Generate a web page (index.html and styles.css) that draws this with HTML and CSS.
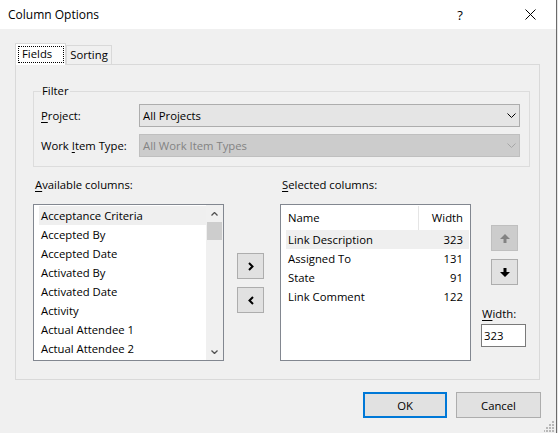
FILE: index.html
```html
<!DOCTYPE html>
<html>
<head>
<meta charset="utf-8">
<title>Column Options</title>
<link rel="stylesheet" href="styles.css">
</head>
<body>
<div class="window">
  <div class="titlebar">
    <span class="title">Column Options</span>
    <span class="help">?</span>
    <span class="close"><svg width="11" height="11" viewBox="0 0 11 11"><path d="M0.5 0.5L10.5 10.5M10.5 0.5L0.5 10.5" stroke="#000" stroke-width="1" fill="none"/></svg></span>
  </div>
  <div class="content">
    <div class="tabs">
      <div class="tab active"><span class="focus">Fields</span></div>
      <div class="tab">Sorting</div>
    </div>
    <div class="panel">
      <fieldset class="group">
        <legend>Filter</legend>
        <div class="filter-grid">
          <label class="lbl"><u>P</u>roject:</label>
          <div class="combo"><span>All Projects</span><svg class="chev" width="9" height="5" viewBox="0 0 9 5"><path d="M0.5 0.5L4.5 4.5L8.5 0.5" fill="none" stroke="#000" stroke-width="1"/></svg></div>
          <label class="lbl">Work <u>I</u>tem Type:</label>
          <div class="combo disabled"><span>All Work Item Types</span><svg class="chev" width="9" height="5" viewBox="0 0 9 5"><path d="M0.5 0.5L4.5 4.5L8.5 0.5" fill="none" stroke="#a6a6a6" stroke-width="1"/></svg></div>
        </div>
      </fieldset>
      <div class="columns">
        <div class="col-avail">
          <div class="cap"><u>A</u>vailable columns:</div>
          <div class="listbox">
            <ul class="items">
              <li class="sel">Acceptance Criteria</li>
              <li>Accepted By</li>
              <li>Accepted Date</li>
              <li>Activated By</li>
              <li>Activated Date</li>
              <li>Activity</li>
              <li>Actual Attendee 1</li>
              <li>Actual Attendee 2</li>
            </ul>
            <div class="scrollbar">
              <div class="sb-btn"><svg width="7" height="4" viewBox="0 0 7 4"><path d="M0.5 3.5L3.5 0.5L6.5 3.5" stroke="#505050" stroke-width="1.3" fill="none"/></svg></div>
              <div class="sb-thumb"></div>
              <div class="sb-track"></div>
              <div class="sb-btn"><svg width="7" height="4" viewBox="0 0 7 4"><path d="M0.5 0.5L3.5 3.5L6.5 0.5" stroke="#505050" stroke-width="1.3" fill="none"/></svg></div>
            </div>
          </div>
        </div>
        <div class="move-btns">
          <button class="btn sq"><svg width="6" height="9" viewBox="0 0 6 9"><path d="M1 1L4.5 4.5L1 8" fill="none" stroke="#000" stroke-width="2"/></svg></button>
          <button class="btn sq"><svg width="6" height="9" viewBox="0 0 6 9"><path d="M5 1L1.5 4.5L5 8" fill="none" stroke="#000" stroke-width="2"/></svg></button>
        </div>
        <div class="col-sel">
          <div class="cap"><u>S</u>elected columns:</div>
          <div class="listview">
            <div class="lv-head"><span class="h-name">Name</span><span class="h-width">Width</span></div>
            <div class="lv-row sel"><span>Link Description</span><span>323</span></div>
            <div class="lv-row"><span>Assigned To</span><span>131</span></div>
            <div class="lv-row"><span>State</span><span>91</span></div>
            <div class="lv-row"><span>Link Comment</span><span>122</span></div>
          </div>
        </div>
        <div class="col-order">
          <button class="btn sq2 disabled"><svg width="10" height="9" viewBox="0 0 10 9"><path d="M5 0L10 5L6.5 5L6.5 9L3.5 9L3.5 5L0 5Z" fill="#838383"/></svg></button>
          <button class="btn sq2"><svg width="10" height="9" viewBox="0 0 10 9"><path d="M5 9L10 4L6.5 4L6.5 0L3.5 0L3.5 4L0 4Z" fill="#000"/></svg></button>
          <div class="cap wcap"><u>W</u>idth:</div>
          <div class="input">323</div>
        </div>
      </div>
    </div>
    <div class="footer">
      <button class="btn dlg default">OK</button>
      <button class="btn dlg cancel">Cancel</button>
    </div>
  </div>
  <svg class="grip" width="11" height="11" viewBox="0 0 11 11">
    <rect x="8" y="0" width="2" height="2" fill="#b8b8b8"/>
    <rect x="5" y="3" width="2" height="2" fill="#b8b8b8"/>
    <rect x="8" y="3" width="2" height="2" fill="#b8b8b8"/>
    <rect x="2" y="6" width="2" height="2" fill="#b8b8b8"/>
    <rect x="5" y="6" width="2" height="2" fill="#b8b8b8"/>
    <rect x="8" y="6" width="2" height="2" fill="#b8b8b8"/>
    <rect x="-1" y="9" width="2" height="2" fill="#b8b8b8"/>
    <rect x="2" y="9" width="2" height="2" fill="#b8b8b8"/>
    <rect x="5" y="9" width="2" height="2" fill="#b8b8b8"/>
    <rect x="8" y="9" width="2" height="2" fill="#b8b8b8"/>
  </svg>
</div>
</body>
</html>
```

FILE: styles.css
```css
* { box-sizing: border-box; }
html, body { margin: 0; padding: 0; }
body {
  width: 558px;
  height: 433px;
  overflow: hidden;
  background: #e6e6e6;
  font-family: "Open Sans", "Segoe UI", sans-serif;
  font-size: 11.3px;
  color: #000;
}
u { text-decoration: underline; text-underline-offset: 2px; }

.window {
  position: relative;
  width: 557px;
  height: 433px;
  background: #f0f0f0;
  border-right: 1px solid #6b6b6b;
}

.titlebar {
  height: 29px;
  background: #fff;
  display: flex;
  align-items: center;
  padding-left: 8px;
  padding-right: 20px;
}
.title { flex: 1; font-size: 12px; }
.help { width: 12px; text-align: center; font-size: 13px; }
.close { display: flex; margin-left: 59px; }

.content { padding: 14px 0 0 15px; }

.tabs {
  display: flex;
  align-items: flex-end;
  height: 21px;
}
.tab {
  height: 19px;
  width: 46px;
  border: 1px solid #d9d9d9;
  border-bottom: none;
  background: #f0f0f0;
  text-align: center;
  line-height: 17px;
}
.tab.active {
  position: relative;
  z-index: 1;
  width: 51px;
  height: 22px;
  margin-bottom: -1px;
  background: #fff;
  padding: 2px 0 0 2px;
  text-align: left;
}
.focus {
  display: block;
  width: 46px;
  height: 17px;
  line-height: 15px;
  padding-left: 4px;
  outline: 1px dotted #000;
  outline-offset: -1px;
}

.panel {
  width: 525px;
  height: 316px;
  border: 1px solid #d9d9d9;
  padding: 18px 0 0 17px;
}

.group {
  margin: 0;
  width: 497px;
  border: 1px solid #dcdcdc;
  padding: 5px 9px 9px 7px;
}
.group legend {
  padding: 0 1px;
  line-height: 16px;
}
.filter-grid {
  display: grid;
  grid-template-columns: 98px 381px;
  row-gap: 7px;
  align-items: center;
}
.lbl { line-height: 16px; }
.combo {
  height: 23px;
  border: 1px solid #adadad;
  background: #e5e5e5;
  display: flex;
  align-items: center;
  padding: 0 3px 0 3px;
}
.combo .chev { margin-left: auto; }
.combo.disabled {
  background: #cccccc;
  border-color: #bfbfbf;
  color: #838383;
}

.columns { display: flex; margin-top: 10px; }
.cap { line-height: 16px; padding-left: 2px; margin-bottom: 11px; }

.col-avail { width: 191px; }
.listbox {
  height: 157px;
  border: 1px solid #828790;
  background: #fff;
  display: flex;
}
.items {
  list-style: none;
  margin: 0;
  padding: 1px 0 0 5px;
  flex: 1;
}
.items li {
  height: 19px;
  line-height: 19px;
  padding-left: 2px;
}
.items li.sel, .lv-row.sel { background: #efefef; }

.scrollbar {
  width: 17px;
  background: #f0f0f0;
  display: flex;
  flex-direction: column;
}
.sb-btn {
  height: 17px;
  display: flex;
  align-items: center;
  justify-content: center;
}
.sb-thumb {
  height: 18px;
  margin: 0 1px;
  background: #cdcdcd;
}
.sb-track { flex: 1; }

.btn {
  margin: 0;
  padding: 0;
  font: inherit;
  color: #000;
  background: #e1e1e1;
  border: 1px solid #adadad;
  display: flex;
  align-items: center;
  justify-content: center;
}
.btn.disabled { background: #cccccc; border-color: #bfbfbf; }

.move-btns {
  margin-left: 13px;
  padding-top: 76px;
  display: flex;
  flex-direction: column;
  gap: 8px;
}
.sq { width: 27px; height: 26px; }

.col-sel { width: 191px; margin-left: 16px; }
.listview {
  height: 157px;
  border: 1px solid #828790;
  background: #fff;
}
.lv-head {
  height: 25px;
  display: flex;
  align-items: center;
}
.h-name {
  width: 138px;
  padding-left: 7px;
  height: 24px;
  line-height: 24px;
  border-right: 1px solid #e5e5e5;
}
.h-width {
  flex: 1;
  text-align: right;
  padding-right: 7px;
}
.lv-row {
  height: 19px;
  line-height: 19px;
  margin: 0 1px 0 5px;
  padding: 0 6px 0 2px;
  display: flex;
  justify-content: space-between;
}

.col-order {
  margin-left: 10px;
  padding-top: 48px;
  display: flex;
  flex-direction: column;
}
.sq2 { width: 27px; height: 26px; margin-left: 10px; }
.sq2 + .sq2 { margin-top: 8px; }
.wcap { margin-top: 21px; margin-bottom: 2px; padding-left: 1px; }
.input {
  width: 45px;
  height: 23px;
  border: 1px solid #7a7a7a;
  background: #fff;
  line-height: 21px;
  padding-left: 2px;
}

.footer {
  display: flex;
  justify-content: flex-end;
  gap: 9px;
  padding-right: 15px;
  margin-top: 12px;
}
.dlg { height: 26px; }
.dlg.default { width: 84px; border: 2px solid #0078d7; }
.dlg.cancel { width: 85px; }

.grip { position: absolute; right: 1px; bottom: 1px; }
```
